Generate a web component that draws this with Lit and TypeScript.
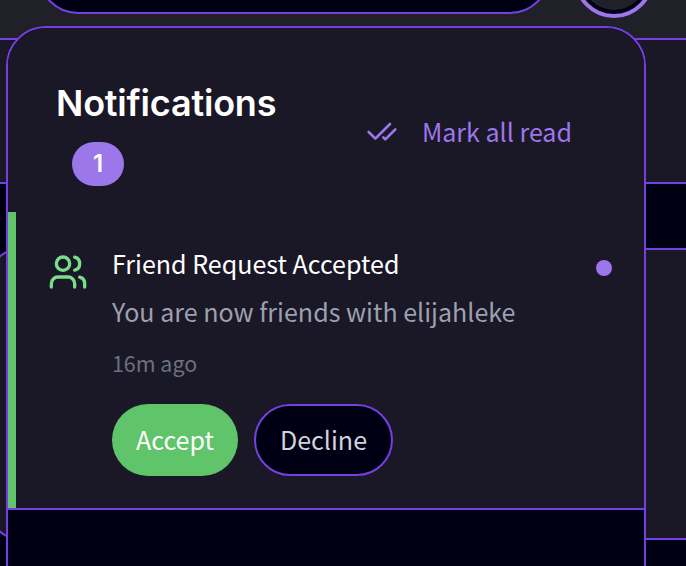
import { LitElement, html, css, svg } from "lit";
import { customElement, property } from "lit/decorators.js";

const checks = svg`<path d="M18 6 7 17l-5-5"/><path d="m22 10-7.500 7.500L13 16"/>`;
const users = svg`<path d="M16 21v-2a4 4 0 0 0-4-4H6a4 4 0 0 0-4 4v2"/><circle cx="9" cy="7" r="4"/><path d="M22 21v-2a4 4 0 0 0-3-3.870"/><path d="M16 3.130a4 4 0 0 1 0 7.750"/>`;

@customElement("notification-item")
class NotificationItem extends LitElement {
  @property() heading = "";
  @property() message = "";
  @property() time = "";

  static styles = css`
    :host { display: block; border-bottom: 2px solid #753fe2; }
    .item {
      display: flex;
      box-sizing: border-box;
      height: 296px;
      padding: 32px;
      border-left: 8px solid #60c46a;
    }
    .icon {
      width: 40px;
      height: 40px;
      margin: 8px 24px 0 0;
      flex: none;
      fill: none;
      stroke: #79de8b;
      stroke-width: 2;
      stroke-linecap: round;
      stroke-linejoin: round;
    }
    .body { flex: 1; }
    .title, .message, .time { white-space: nowrap; }
    .title { font-size: 25.06px; line-height: 38px; height: 40px; color: #fff; }
    .message { font-size: 25.06px; line-height: 38px; height: 40px; margin-top: 8px; color: #9ca0af; }
    .time { font-size: 21.4px; line-height: 30px; height: 32px; margin-top: 16px; color: #6b7080; }
    .actions { display: flex; gap: 16px; margin-top: 24px; }
    .button {
      box-sizing: border-box;
      height: 72px;
      border: 0;
      border-radius: 36px;
      padding: 0 0 2px;
      font: 400 25.06px/70px "Noto Sans CJK SC", sans-serif;
      text-align: center;
    }
    .accept { width: 126px; background: #60c46a; color: #fff; }
    .decline { width: 139px; background: #000014; color: #d1d4dc; border: 2px solid #753fe2; line-height: 66px; }
    .dot { width: 16px; height: 16px; flex: none; border-radius: 50%; background: #9c77e9; margin-top: 16px; }
  `;

  render() {
    return html`
      <div class="item">
        <svg class="icon" viewBox="0 0 24 24">${users}</svg>
        <div class="body">
          <div class="title">${this.heading}</div>
          <div class="message">${this.message}</div>
          <div class="time">${this.time}</div>
          <div class="actions">
            <button class="button accept">Accept</button>
            <button class="button decline">Decline</button>
          </div>
        </div>
        <span class="dot"></span>
      </div>
    `;
  }
}

@customElement("app-root")
class AppRoot extends LitElement {
  static styles = css`
    :host {
      display: block;
      position: relative;
      width: 686px;
      height: 566px;
      overflow: hidden;
      background: #000014;
      font-family: "Noto Sans CJK SC", sans-serif;
    }
    .topbar {
      display: flex;
      box-sizing: border-box;
      height: 40px;
      padding-left: 38px;
      background: #202029;
      border-bottom: 2px solid #753fe2;
    }
    .search {
      box-sizing: border-box;
      width: 512px;
      height: 80px;
      margin-top: -66px;
      border: 2px solid #753fe2;
      border-radius: 40px;
      background: #000014;
    }
    .avatar {
      box-sizing: border-box;
      width: 80px;
      height: 80px;
      margin: -62px 0 0 24px;
      border: 4px solid #9c77e9;
      border-radius: 50%;
      background: #202029;
      box-shadow: inset 0 0 0 4px #000014;
    }
    .band {
      box-sizing: border-box;
      height: 144px;
      background: #1a1726;
      border-bottom: 2px solid #753fe2;
    }
    .card {
      box-sizing: border-box;
      height: 292px;
      margin: 64px -40px 0 -12px;
      background: #1a1726;
      border: 2px solid #753fe2;
      border-radius: 32px;
    }
    .panel {
      position: absolute;
      left: 6px;
      top: 26px;
      box-sizing: border-box;
      width: 640px;
      height: 600px;
      overflow: hidden;
      background: #000014;
      border: 2px solid #753fe2;
      border-radius: 40px;
    }
    .content { background: #1a1726; }
    .head {
      display: flex;
      justify-content: space-between;
      box-sizing: border-box;
      height: 184px;
      padding: 47px 72px 0 48px;
    }
    .title {
      margin: 0;
      font: 600 36px/56px Inter, sans-serif;
      letter-spacing: -0.2px;
      color: #fff;
    }
    .count {
      width: 52px;
      height: 44px;
      margin: 11px 0 0 16px;
      border-radius: 22px;
      background: #9c77e9;
      color: #fff;
      font: 600 24px/44px Inter, sans-serif;
      text-align: center;
    }
    .mark {
      display: flex;
      align-items: center;
      height: 40px;
      margin-top: 37px;
      font-size: 25.06px;
      line-height: 38px;
      white-space: nowrap;
      color: #9c77e9;
    }
    .mark span { height: 40px; }
    .checks {
      width: 32px;
      height: 32px;
      margin-right: 24px;
      fill: none;
      stroke: currentColor;
      stroke-width: 2;
      stroke-linecap: round;
      stroke-linejoin: round;
    }
  `;

  render() {
    return html`
      <div class="topbar"><div class="search"></div><div class="avatar"></div></div>
      <div class="band"></div>
      <div class="card"></div>
      <section class="panel">
        <div class="content">
          <header class="head">
            <div>
              <h2 class="title">Notifications</h2>
              <div class="count">1</div>
            </div>
            <div class="mark"><svg class="checks" viewBox="0 0 24 24">${checks}</svg><span>Mark all read</span></div>
          </header>
          <notification-item
            heading="Friend Request Accepted"
            message="You are now friends with elijahleke"
            time="16m ago"
          ></notification-item>
        </div>
      </section>
    `;
  }
}
